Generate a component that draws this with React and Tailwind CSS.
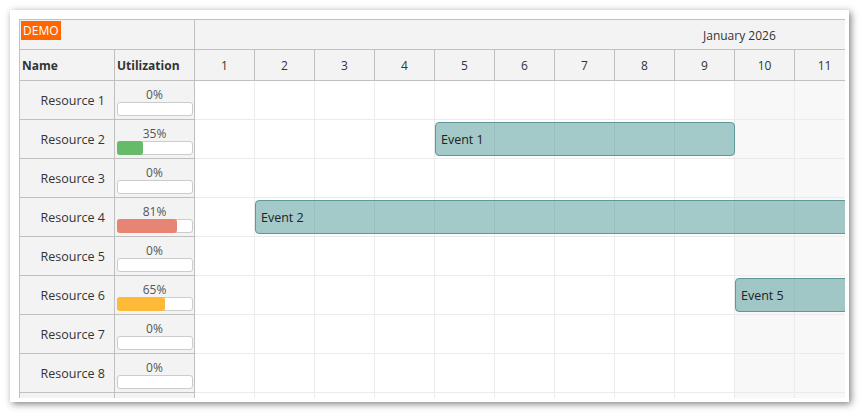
import React from 'react';

const resources = [
  { name: 'Resource 1', util: 0 },
  { name: 'Resource 2', util: 35 },
  { name: 'Resource 3', util: 0 },
  { name: 'Resource 4', util: 81 },
  { name: 'Resource 5', util: 0 },
  { name: 'Resource 6', util: 65 },
  { name: 'Resource 7', util: 0 },
  { name: 'Resource 8', util: 0 },
  { name: '', util: null },
];

const days = [1, 2, 3, 4, 5, 6, 7, 8, 9, 10, 11];
const weekend = [10, 11];

// row index, start day, end day (exclusive)
const events = [
  { text: 'Event 1', row: 1, start: 5, end: 10 },
  { text: 'Event 2', row: 3, start: 2, end: 13 },
  { text: 'Event 5', row: 5, start: 10, end: 13 },
];

const barColor = (u) => {
  if (u >= 80) return 'bg-[#e88474]';
  if (u >= 50) return 'bg-[#ffb938]';
  return 'bg-[#66bb6a]';
};

function UtilBar({ value }) {
  return (
    <div className="flex flex-col items-start pt-[7px]">
      <div className="w-full text-center text-[12px] leading-[14px] text-[#555]">{value}%</div>
      <div className="relative ml-[2px] w-[76px] h-[14px] rounded-[3px] border border-[#ccc] bg-white">
        {value > 0 && (
          <div
            className={`absolute -left-px -top-px -bottom-px rounded-[3px] ${barColor(value)}`}
            style={{ width: `${value}%` }}
          />
        )}
      </div>
    </div>
  );
}

export default function App() {
  return (
    <div className="w-[860px] h-[413px] bg-white pl-[10px] pt-[10px] overflow-hidden" style={{ fontFamily: '"Open Sans", sans-serif' }}>
      <div className="w-[839px] h-[392px] bg-white shadow-[2px_2px_7px_rgba(0,0,0,0.5)] pl-[9px] pt-[9px] overflow-hidden">
        <div className="flex w-[826px] h-[379px] overflow-hidden border-t border-l border-[#c0c0c0] text-[#333] text-[12px]">
          {/* row header */}
          <div className="shrink-0 w-[175px] bg-[#f3f3f3]">
            <div className="h-[30px] border-b border-r border-[#c0c0c0] pt-px pl-px">
              <span className="inline-block bg-[#ff6600] text-white text-[12px] leading-[19px] px-[2px]">DEMO</span>
            </div>
            <div className="flex h-[31px] border-b border-[#c0c0c0] font-bold">
              <div className="w-[95px] border-r border-[#c0c0c0] flex items-center pl-[2px] pt-[2px]">Name</div>
              <div className="w-[80px] border-r border-[#c0c0c0] flex items-center pl-[2px] pt-[2px]">Utilization</div>
            </div>
            {resources.map((r, i) => (
              <div key={i} className="flex h-[39px] border-b border-[#c0c0c0]">
                <div className="w-[95px] border-r border-[#c0c0c0] flex items-center justify-end pr-[9px] pt-[3px] text-[12.5px]">{r.name}</div>
                <div className="w-[80px] border-r border-[#c0c0c0]">
                  {r.util !== null && <UtilBar value={r.util} />}
                </div>
              </div>
            ))}
          </div>

          {/* timeline */}
          <div className="flex-1 overflow-hidden">
            <div className="w-[720px]">
              <div className="h-[30px] border-b border-[#c0c0c0] bg-[#f3f3f3] flex items-center pl-[508px] pt-[2px] whitespace-nowrap">January 2026</div>
              <div className="flex h-[31px] border-b border-[#c0c0c0] bg-[#f3f3f3]">
                {days.map((d) => (
                  <div key={d} className="w-[60px] shrink-0 border-r border-[#c0c0c0] flex items-center justify-center pt-[2px]">{d}</div>
                ))}
              </div>
              <div className="relative">
                {resources.map((r, i) => (
                  <div key={i} className="flex h-[39px] border-b border-[#ebebeb]">
                    {days.map((d) => (
                      <div
                        key={d}
                        className={`w-[60px] shrink-0 border-r border-[#ebebeb] ${weekend.includes(d) ? 'bg-[#f8f8f8]' : 'bg-white'}`}
                      />
                    ))}
                  </div>
                ))}
                {events.map((e) => (
                  <div
                    key={e.text}
                    className="absolute h-[34px] rounded-[4px] border border-[#5e9898] bg-[#4a9494]/50 flex items-center pl-[5px] pt-[3px] text-[12.5px] text-[#222]"
                    style={{ left: (e.start - 1) * 60, top: e.row * 39 + 2, width: (e.end - e.start) * 60 }}
                  >
                    {e.text}
                  </div>
                ))}
              </div>
            </div>
          </div>
        </div>
      </div>
    </div>
  );
}
